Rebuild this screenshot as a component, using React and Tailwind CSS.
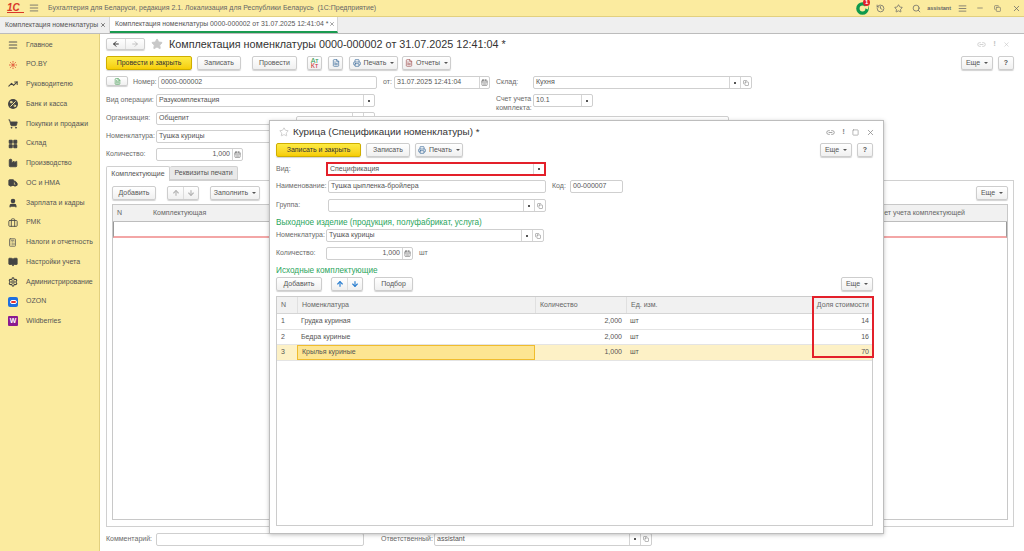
import React from "react";
import {
  AlignJustify, ArrowDown, ArrowLeft, ArrowRight, ArrowUp, Calculator, CalendarDays,
  Copy, History, Link2, Minus, Printer, Search, Settings, ShoppingCart, Square, Star, TrendingUp,
  Truck, User, X, FileText, BookOpen, Factory, LayoutGrid, Briefcase, Percent,
} from "lucide-react";

const Caret = () => <span className="ml-[4px] inline-block border-x-[2px] border-t-[2px] border-x-transparent border-t-[#555]" />;

const Btn = ({ children, className = "", height = "h-[14px]" }) => (
  <button className={`flex ${height} items-center justify-center whitespace-nowrap rounded-[2px] border border-[#cdcdcd] bg-gradient-to-b from-white to-[#f0f0f0] text-[7px] text-[#555] shadow-[0_1px_1px_rgba(0,0,0,0.18)] ${className}`}>
    {children}
  </button>
);

const YellowBtn = ({ children, className = "" }) => (
  <button className={`flex h-[14px] items-center justify-center whitespace-nowrap rounded-[2px] border border-[#cfae00] bg-gradient-to-b from-[#fdeb42] to-[#f6cd00] text-[7px] text-[#333] shadow-[0_1px_1px_rgba(0,0,0,0.18)] ${className}`}>
    {children}
  </button>
);

const Field = ({ value = "", className = "", height = "h-[13px]", right, select, open, cal }) => (
  <div className={`flex ${height} items-center rounded-[2px] border border-[#cfcfcf] bg-white text-[7px] text-[#555] ${className}`}>
    <span className={`min-w-0 flex-1 truncate px-[2px] ${right ? "text-right" : ""}`}>{value}</span>
    {select && (
      <span className="flex h-full w-[11px] items-center justify-center border-l border-[#d5d5d5]">
        <span className="h-[2px] w-[2px] bg-[#555]" />
      </span>
    )}
    {open && (
      <span className="flex h-full w-[11px] items-center justify-center border-l border-[#d5d5d5]">
        <Copy size={6} className="text-[#777]" />
      </span>
    )}
    {cal && (
      <span className="flex h-full w-[10px] items-center justify-center border-l border-[#d5d5d5]">
        <CalendarDays size={7} className="text-[#666]" />
      </span>
    )}
  </div>
);

const Label = ({ children, className = "" }) => (
  <span className={`shrink-0 whitespace-nowrap text-[7px] text-[#6a6a6a] ${className}`}>{children}</span>
);

const MoveBtns = ({ color }) => (
  <Btn className="w-[32px]">
    <ArrowUp size={8} strokeWidth={3.5} className={`${color} mx-[3px]`} />
    <span className="h-full w-px bg-[#dcdcdc]" />
    <ArrowDown size={8} strokeWidth={3.5} className={`${color} mx-[3px]`} />
  </Btn>
);

const OzonIcon = () => (
  <span className="flex h-[10px] w-[10px] items-center justify-center rounded-[2px] bg-[#1f6fe0]">
    <span className="h-[4px] w-[7px] rounded-full border border-white bg-[#e8322f]" />
  </span>
);

const WbIcon = () => (
  <span className="flex h-[10px] w-[10px] items-center justify-center rounded-[1px] bg-[#8a1a8f] text-[7px] font-bold text-white">W</span>
);

const RoIcon = () => (
  <svg width="10" height="10" viewBox="0 0 10 10" stroke="#e0563a" strokeWidth="0.9" fill="none">
    <path d="M5 1v8M1 5h8M2.2 2.2l5.6 5.6M7.8 2.2L2.2 7.8" strokeDasharray="1.6 0.6" />
  </svg>
);

const SupportIcon = () => (
  <svg width="13" height="13" viewBox="0 0 13 13">
    <circle cx="6.5" cy="6.5" r="4.6" fill="none" stroke="#0f9a4d" strokeWidth="3.4" />
    <path d="M7 5.5l5-3v5z" fill="#fbeb9f" />
  </svg>
);

const menu = [
  { label: "Главное", icon: <AlignJustify size={10} strokeWidth={2.5} className="text-[#555]" /> },
  { label: "РО.BY", icon: <RoIcon /> },
  { label: "Руководителю", icon: <TrendingUp size={10} strokeWidth={2.5} className="text-[#444]" /> },
  { label: "Банк и касса", icon: <Percent size={8} strokeWidth={3} className="h-[10px] w-[10px] rounded-full bg-[#444] p-[1px] text-[#fbeb9f]" /> },
  { label: "Покупки и продажи", icon: <ShoppingCart size={10} fill="#444" className="text-[#444]" /> },
  { label: "Склад", icon: <LayoutGrid size={10} strokeWidth={2.5} fill="#444" className="text-[#444]" /> },
  { label: "Производство", icon: <Factory size={10} fill="#444" className="text-[#444]" /> },
  { label: "ОС и НМА", icon: <Truck size={10} fill="#444" className="text-[#444]" /> },
  { label: "Зарплата и кадры", icon: <User size={10} strokeWidth={3} fill="#444" className="text-[#444]" /> },
  { label: "РМК", icon: <Briefcase size={10} className="text-[#444]" /> },
  { label: "Налоги и отчетность", icon: <Calculator size={9} className="text-[#555]" /> },
  { label: "Настройки учета", icon: <BookOpen size={10} fill="#444" className="text-[#444]" /> },
  { label: "Администрирование", icon: <Settings size={10} strokeWidth={2.5} className="text-[#444]" /> },
  { label: "OZON", icon: <OzonIcon /> },
  { label: "Wildberries", icon: <WbIcon /> },
];

const specRows = [
  { n: 1, name: "Грудка куриная", qty: "2,000", share: 14 },
  { n: 2, name: "Бедра куриные", qty: "2,000", share: 16 },
  { n: 3, name: "Крылья куриные", qty: "1,000", share: 70, active: true },
];

const SpecWindow = () => (
  <div className="absolute left-[269px] top-[120px] flex h-[414px] w-[615px] flex-col border border-[#bdbdbd] bg-white px-[6px] shadow-[0_1px_4px_rgba(0,0,0,0.25)]">
    <div className="flex h-[22px] items-center">
      <Star size={10} className="ml-[3px] text-[#c5c5c5]" />
      <span className="ml-[4px] text-[9.85px] text-[#333]">Курица (Спецификации номенклатуры) *</span>
      <div className="ml-auto mr-[2px] flex items-center gap-[7px] text-[#888]">
        <Link2 size={9} />
        <span className="text-[8px] font-bold leading-none">!</span>
        <Square size={7} />
        <X size={9} />
      </div>
    </div>
    <div className="flex items-center">
      <YellowBtn className="w-[85px]">Записать и закрыть</YellowBtn>
      <Btn className="ml-[5px] w-[44px]">Записать</Btn>
      <Btn className="ml-[5px] w-[48px]"><Printer size={8} className="mr-[3px] text-[#3a6a9a]" />Печать<Caret /></Btn>
      <Btn className="ml-auto w-[32px]">Еще<Caret /></Btn>
      <Btn className="ml-[5px] mr-[4px] w-[16px] font-bold">?</Btn>
    </div>
    <div className="mt-[5px] flex items-center">
      <Label className="w-[50px]">Вид:</Label>
      <div className="w-[220px] border-2 border-[#e3202a]">
        <Field value="Спецификация" select height="h-[10px]" className="rounded-none border-0" />
      </div>
    </div>
    <div className="mt-[4px] flex items-center">
      <Label className="w-[52px]">Наименование:</Label>
      <Field value="Тушка цыпленка-бройлера" className="w-[218px]" />
      <Label className="ml-[6px] w-[18px]">Код:</Label>
      <Field value="00-000007" className="w-[53px]" />
    </div>
    <div className="mt-[6px] flex items-center">
      <Label className="w-[52px]">Группа:</Label>
      <Field select open className="w-[218px]" />
    </div>
    <div className="mt-[4px] h-[13px] text-[8.2px] leading-[13px] text-[#2ba55d]">Выходное изделие (продукция, полуфабрикат, услуга)</div>
    <div className="flex items-center">
      <Label className="w-[50px]">Номенклатура:</Label>
      <Field value="Тушка курицы" select open className="w-[218px]" />
    </div>
    <div className="mt-[5px] flex items-center">
      <Label className="w-[50px]">Количество:</Label>
      <Field value="1,000" right cal className="w-[87px]" />
      <Label className="ml-[6px]">шт</Label>
    </div>
    <div className="mt-[4px] h-[13px] text-[8.2px] leading-[13px] text-[#2ba55d]">Исходные комплектующие</div>
    <div className="flex items-center">
      <Btn className="w-[46px]">Добавить</Btn>
      <div className="ml-[9px]"><MoveBtns color="text-[#2b7fd0]" /></div>
      <Btn className="ml-[11px] w-[39px]">Подбор</Btn>
      <Btn className="ml-auto mr-[4px] w-[32px]">Еще<Caret /></Btn>
    </div>
    <div className="relative mb-[7px] mr-[4px] mt-[5px] flex-1 border border-[#cccccc]">
      <div className="flex h-[17px] items-center whitespace-nowrap border-b border-[#d5d5d5] bg-[#f1f1f1] text-[7px] text-[#666]">
        <span className="w-[20px] pl-[4px]">N</span>
        <span className="flex h-full w-[238px] items-center border-l border-[#e0e0e0] pl-[4px]">Номенклатура</span>
        <span className="flex h-full w-[91px] items-center border-l border-[#e0e0e0] pl-[4px]">Количество</span>
        <span className="flex h-full w-[187px] items-center border-l border-[#e0e0e0] pl-[4px]">Ед. изм.</span>
        <span className="flex h-full flex-1 items-center justify-end border-l border-[#e0e0e0] pr-[3px]">Доля стоимости</span>
      </div>
      {specRows.map((row) => (
        <div key={row.n} className={`flex h-[15.5px] items-center border-b border-[#e4e4e4] text-[7px] text-[#555] ${row.active ? "bg-[#fdf1c6]" : "bg-white"}`}>
          <span className="w-[20px] pl-[4px]">{row.n}</span>
          <span className={`flex h-full w-[238px] items-center pl-[4px] ${row.active ? "border border-[#f0bc2e] bg-[#fde592]" : ""}`}>{row.name}</span>
          <span className="w-[91px] pr-[4px] text-right">{row.qty}</span>
          <span className="w-[187px] pl-[4px]">шт</span>
          <span className="flex-1 pr-[3px] text-right">{row.share}</span>
        </div>
      ))}
      <div className="pointer-events-none absolute -right-[2px] -top-[1px] h-[62px] w-[62px] border-2 border-[#e3202a]" />
    </div>
  </div>
);

export default function App() {
  return (
    <div className="relative flex h-screen w-full flex-col overflow-hidden bg-white font-['Liberation_Sans',Arial,sans-serif]">
      {/* top bar */}
      <header className="flex h-[17px] shrink-0 items-center border-b border-[#e2d07f] bg-[#fbeb9f]">
        <span className="ml-[7px] w-[17px] border-b border-[#d9372a] text-[10px] font-bold italic leading-[9px] text-[#d9372a]">1С</span>
        <AlignJustify size={10} className="ml-[5px] text-[#666]" />
        <span className="ml-[9px] whitespace-nowrap text-[7px] text-[#666]">Бухгалтерия для Беларуси, редакция 2.1. Локализация для Республики Беларусь&nbsp;&nbsp;(1С:Предприятие)</span>
        <div className="ml-auto flex items-center text-[#666]">
          <span className="relative h-[13px] w-[13px]">
            <SupportIcon />
            <span className="absolute -right-[1px] -top-[3px] flex h-[7px] w-[7px] items-center justify-center rounded-full bg-[#e3202a] text-[6px] font-bold leading-none text-white">1</span>
          </span>
          <History size={9} className="ml-[7px]" />
          <Star size={9} className="ml-[9px]" />
          <Search size={9} className="ml-[9px]" />
          <span className="ml-[6px] text-[5.5px] font-bold text-[#666]">assistant</span>
          <AlignJustify size={9} className="ml-[7px]" />
          <Minus size={8} className="ml-[9px]" />
          <Copy size={7} className="ml-[10px]" />
          <X size={9} className="ml-[11px] mr-[3px]" />
        </div>
      </header>

      {/* open tabs */}
      <nav className="flex h-[17px] shrink-0 items-stretch whitespace-nowrap border-b border-[#bcbcbc] bg-[#efefef] text-[6.85px] text-[#555]">
        <div className="flex w-[110px] items-center border-r border-[#d5d5d5] pl-[5px]">
          Комплектация номенклатуры
          <X size={6} strokeWidth={3} className="ml-auto mr-[3px] text-[#555]" />
        </div>
        <div className="flex w-[228px] items-center border-b-2 border-r border-b-[#1a9a50] border-r-[#d5d5d5] bg-white pl-[5px]">
          Комплектация номенклатуры 0000-000002 от 31.07.2025 12:41:04 *
          <X size={6} strokeWidth={3} className="ml-auto mr-[2px] text-[#888]" />
        </div>
      </nav>

      <div className="flex min-h-0 flex-1">
        {/* sidebar */}
        <aside className="w-[100px] shrink-0 border-r border-[#e2d07f] bg-[#fbeb9f] pt-[1px]">
          {menu.map((item) => (
            <div key={item.label} className="flex h-[19.75px] items-center whitespace-nowrap pl-[8px] text-[7px] text-[#555]">
              <span className="flex w-[18px] shrink-0 items-center">{item.icon}</span>
              {item.label}
            </div>
          ))}
        </aside>

        {/* document form */}
        <main className="flex min-w-0 flex-1 flex-col pl-[6px] pr-[10px] pt-[4px]">
          <div className="flex h-[12px] items-center">
            <Btn height="h-[12px]" className="w-[39px]">
              <ArrowLeft size={8} strokeWidth={3} className="mx-[5px] text-[#333]" />
              <span className="h-full w-px bg-[#dcdcdc]" />
              <ArrowRight size={8} className="mx-[5px] text-[#aaa]" />
            </Btn>
            <Star size={12} fill="#c8c8c8" className="ml-[6px] text-[#c8c8c8]" />
            <span className="ml-[6px] whitespace-nowrap text-[10.8px] text-[#333]">Комплектация номенклатуры 0000-000002 от 31.07.2025 12:41:04 *</span>
            <div className="ml-auto mr-[4px] flex items-center gap-[7px] text-[#c4c4c4]">
              <Link2 size={9} />
              <span className="text-[8px] font-bold leading-none">!</span>
              <X size={7} />
            </div>
          </div>
          <div className="mt-[6px] flex items-center">
            <YellowBtn className="w-[86px]">Провести и закрыть</YellowBtn>
            <Btn className="ml-[5px] w-[44px]">Записать</Btn>
            <Btn className="ml-[11px] w-[45px]">Провести</Btn>
            <Btn className="ml-[10px] w-[15px] flex-col text-[4.5px] leading-[5px]">
              <span className="text-[#2c9a50]">Ат</span>
              <span className="text-[#c33]">Кт</span>
            </Btn>
            <Btn className="ml-[6px] w-[15px]"><FileText size={8} className="text-[#3a6a9a]" /></Btn>
            <Btn className="ml-[6px] w-[49px]"><Printer size={8} className="mr-[3px] text-[#3a6a9a]" />Печать<Caret /></Btn>
            <Btn className="ml-[4px] w-[49px]"><FileText size={8} className="mr-[3px] text-[#a05050]" />Отчеты<Caret /></Btn>
            <Btn className="ml-auto w-[32px]">Еще<Caret /></Btn>
            <Btn className="ml-[5px] w-[16px] font-bold">?</Btn>
          </div>
          <div className="mt-[6px] flex h-[13px] items-center">
            <Btn height="h-[10px]" className="w-[22px] self-start"><FileText size={7} className="text-[#3c9a4c]" /></Btn>
            <Label className="ml-[5px] w-[25px]">Номер:</Label>
            <Field value="0000-000002" className="w-[219px]" />
            <Label className="ml-[6px] w-[11px]">от:</Label>
            <Field value="31.07.2025 12:41:04" cal className="w-[96px]" />
            <Label className="ml-[6px] w-[37px]">Склад:</Label>
            <Field value="Кухня" select open className="w-[219px]" />
          </div>
          <div className="mt-[5px] flex h-[13px] items-center">
            <Label className="w-[50px]">Вид операции:</Label>
            <Field value="Разукомплектация" select className="w-[219px]" />
            <Label className="ml-[121px] mt-[5px] w-[37px] leading-[9px]">Счет учета<br />комплекта:</Label>
            <Field value="10.1" select className="w-[60px]" />
          </div>
          <div className="mt-[5px] flex h-[13px] items-center">
            <Label className="w-[50px]">Организация:</Label>
            <Field value="Общепит" select open className="w-[219px]" />
          </div>
          <div className="mt-[5px] flex h-[13px] items-center">
            <Label className="w-[50px]">Номенклатура:</Label>
            <Field value="Тушка курицы" select open className="w-[219px]" />
          </div>
          <div className="mt-[5px] flex h-[13px] items-center">
            <Label className="w-[50px]">Количество:</Label>
            <Field value="1,000" right cal className="w-[87px]" />
          </div>
          <div className="mt-[5px] flex h-[14px] items-stretch whitespace-nowrap text-[7px] text-[#555]">
            <span className="z-10 -mb-px flex w-[64px] items-center justify-center rounded-t-[2px] border border-b-0 border-[#d0d0d0] bg-white">Комплектующие</span>
            <span className="flex w-[68px] items-center justify-center rounded-t-[2px] border border-l-0 border-[#d0d0d0] bg-[#e9e9e9]">Реквизиты печати</span>
          </div>
          <div className="flex min-h-0 flex-1 flex-col border border-[#d0d0d0] px-[5px] pb-[6px] pt-[5px]">
            <div className="flex items-center">
              <Btn className="w-[44px]">Добавить</Btn>
              <div className="ml-[11px]"><MoveBtns color="text-[#b5b5b5]" /></div>
              <Btn className="ml-[11px] w-[50px]">Заполнить<Caret /></Btn>
              <Btn className="ml-auto w-[32px]">Еще<Caret /></Btn>
            </div>
            <div className="mt-[4px] flex-1 border border-[#c8c8c8]">
              <div className="flex h-[17px] items-center whitespace-nowrap border-b border-[#bdbdbd] bg-[#f1f1f1] text-[7px] text-[#666]">
                <span className="w-[36px] pl-[4px]">N</span>
                <span className="pl-[4px]">Комплектующая</span>
                <span className="ml-auto pr-[42px]">Счет учета комплектующей</span>
              </div>
              <div className="h-[16px] border-x border-b-2 border-x-[#999] border-b-[#f3a6a6]" />
            </div>
          </div>
          <div className="flex h-[24px] items-center">
            <Label className="w-[50px]">Комментарий:</Label>
            <Field className="w-[208px]" />
            <Label className="ml-[17px] w-[53px]">Ответственный:</Label>
            <Field value="assistant" select open className="w-[218px]" />
          </div>
        </main>
      </div>

      {/* window behind the spec form */}
      <div className="absolute left-[296px] top-[116px] h-[10px] w-[433px] rounded-[2px] border border-[#cfcfcf] bg-white" />
      <SpecWindow />
    </div>
  );
}
